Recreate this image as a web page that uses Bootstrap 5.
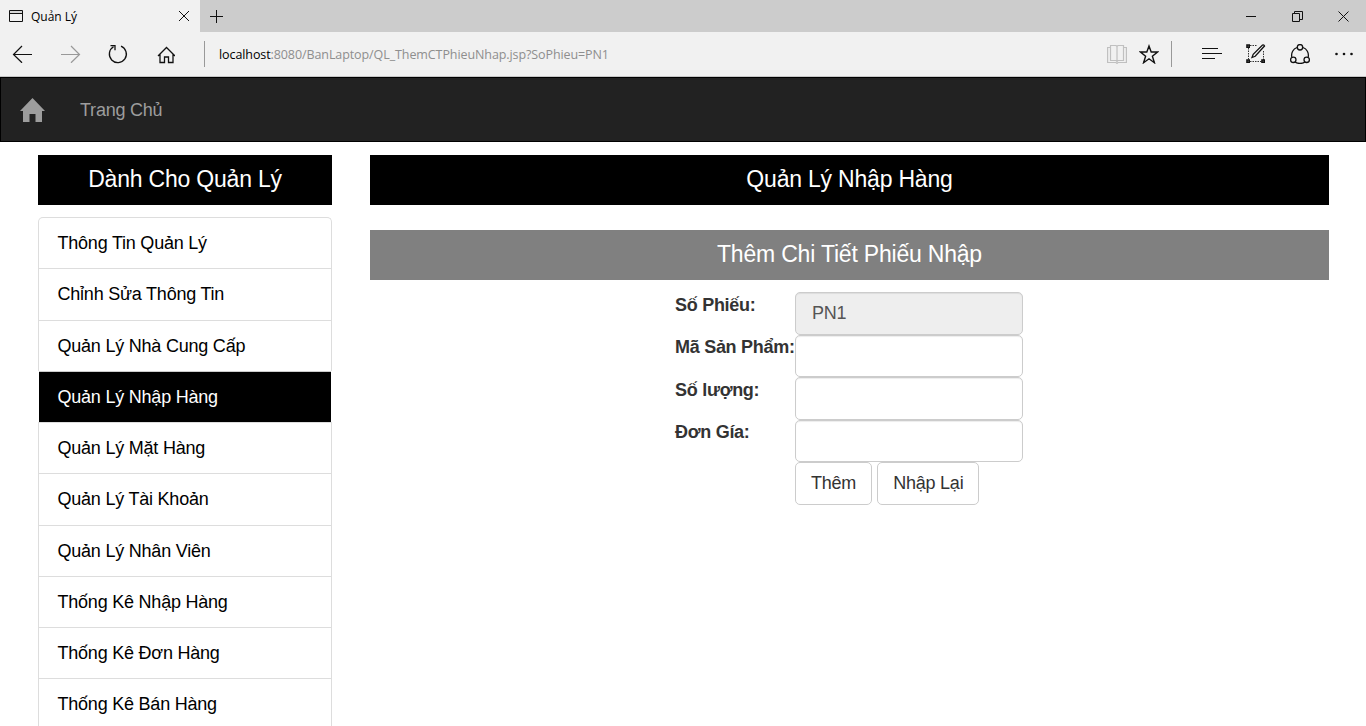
<!DOCTYPE html>
<html lang="vi">
<head>
<meta charset="utf-8">
<meta name="viewport" content="width=device-width, initial-scale=1">
<title>Quản Lý</title>
<link href="https://cdn.jsdelivr.net/npm/bootstrap@5.3.0/dist/css/bootstrap.min.css" rel="stylesheet">
<style>
body{font-family:"Liberation Sans",Arial,sans-serif;font-size:18px;letter-spacing:-.22px;line-height:25px;color:#333;height:726px;overflow:hidden}
svg{display:block;flex:none;fill:none;stroke:#111}
.chrome-ui{font-family:"Open Sans","Noto Sans",sans-serif;font-size:12px;line-height:16px;color:#000}
.tab-strip{height:32px;background:#ccc}
.tab-active{width:200px;height:32px;background:#f1f1f1;padding-left:9px;padding-right:10px}
.tab-title{margin-left:8px;padding-top:1px;letter-spacing:0}
.window-btns{gap:35px;padding-right:17px}
.address-row{height:45px;background:#f1f1f1;border-bottom:1px solid #c6c6c6;padding-left:12px;padding-right:12px}
.v-sep{width:1px;height:26px;background:#999}
.url-text{margin-left:14px;padding-top:2px;font-size:12.5px;letter-spacing:-.09px;color:#8e8e8e}
.site-nav{height:65px;background:#222;border:1px solid #000;padding:1px 19px 0}
.site-nav .nav-link{color:#9d9d9d;padding:1px 0 0}
.side-col{width:294px}
.main-col{width:959px}
.title-bar{height:50px;font-size:23px;letter-spacing:-.2px;line-height:48px;text-align:center;color:#fff;background:#000}
.title-bar.sub{background:gray;margin-top:25px}
.menu-list{margin-top:12px;border-radius:5px;--bs-list-group-border-color:#ddd}
.menu-list .list-group-item{height:51.25px;padding:13.2px 18.5px 0;color:#000;line-height:25px;border-width:1px 1px 0;border-color:#ddd}
.menu-list .list-group-item.active{background:#000;color:#fff;margin:0 1px;padding-left:18.5px;border:0;border-top:1px solid #ccc}
.entry-form{width:348px;margin:12px 0 0 305px;display:grid;grid-template-columns:120px 228px;grid-auto-rows:42.5px}
.entry-form label{font-weight:700;white-space:nowrap;padding-top:.6px;letter-spacing:-.28px}
.entry-form .form-control{height:42.5px;border:1px solid #ccc;border-radius:5px;padding:6px 16px;font-size:18px;letter-spacing:-.22px;color:#555;box-shadow:inset 0 1px 1px rgba(0,0,0,.075)}
.entry-form .form-control[readonly]{background:#eee}
.entry-form .btn{height:43px;border:1px solid #ccc;border-radius:5px;padding:0 15px;font-size:18px;letter-spacing:-.22px;color:#333;background:#fff}
</style>
</head>
<body>
<header class="chrome-ui">
  <div class="tab-strip d-flex">
    <div class="tab-active d-flex align-items-center">
      <svg width="14" height="12" stroke-width="1"><path d="M.5.5h13v11H.5zM0 3.5h14"/><path d="M1 2h12" stroke="#bbb"/></svg>
      <span class="tab-title">Quản Lý</span>
      <svg class="ms-auto" width="12" height="12" stroke-width="1"><path d="m1 1 10 10M11 1 1 11"/></svg>
    </div>
    <svg class="align-self-center" style="margin-left:9px" width="14" height="14"><path d="M7.5 1v13M1 7.5h13"/></svg>
    <div class="window-btns d-flex align-items-center ms-auto">
      <svg width="11" height="11"><path d="M0 5.5h10"/></svg>
      <svg width="11" height="11"><path d="M.5 2.5h7v8h-7zM2.5 2V.5h8v8H8"/></svg>
      <svg width="11" height="11"><path d="m.5.5 10 10m0-10-10 10"/></svg>
    </div>
  </div>
  <div class="address-row d-flex align-items-center">
    <svg width="21" height="18" stroke-width="1.2"><path d="M20 9.500H1.500M10 1 1.500 9.500l8.500 8.300"/></svg>
    <svg style="margin-left:28px" width="20" height="18" stroke-width="1.2"><path stroke="#999" d="M0 9.500h18.500M10 1 18.500 9.500 10 17.800"/></svg>
    <svg style="margin-left:27px" width="20" height="20" stroke-width="1.3"><path d="M13 2.200A8.500 8.500 0 1 1 5.500 2.800M2.500 1.700H7v4.500"/></svg>
    <svg style="margin-left:29px" width="18" height="20" stroke-width="1.3"><path d="M1 12 9.500 3.500 18 12M3 10.500v8h4.500V13h4v5.500H16v-8"/></svg>
    <div class="v-sep" style="margin-left:29px"></div>
    <div class="url-text"><span class="text-black">localhost</span>:8080/BanLaptop/QL_ThemCTPhieuNhap.jsp?SoPhieu=PN1</div>
    <svg class="ms-auto" width="20" height="20"><path stroke="#c0c0c0" stroke-width="1.200" d="M3 3.500H.6v15H9l1 1 1-1h8.400v-15H17M10 3v14M3.500 1.500H9l1 1 1-1h5.500v15H11l-1 1-1-1H3.500z"/></svg>
    <svg style="margin-left:12px" width="20" height="20" stroke-width="1.4"><path d="m10 2 2.200 6h6.300l-5.100 4.200 2 6.500-5.400-3.900-5.400 3.900 2-6.500L1.500 8h6.300z"/></svg>
    <div class="v-sep" style="margin-left:12px"></div>
    <svg style="margin-left:30px" width="20" height="14"><path d="M0 1.500h16M0 6.500h20M0 11.500h13"/></svg>
    <svg style="margin-left:24px" width="20" height="20"><path stroke="#333" stroke-dasharray="1.500 1" d="M4 1.500h7.500M2.500 4v12M4 17.500h12M17.500 7v9"/><path stroke-width="1.600" d="M1 1h2.200v2.200H1zM1 16h2.200v2.200H1zM16 16h2.200v2.200H16z"/><path stroke-width="1.300" d="M6 13.500l1.200-3.200L16.500 1q1.500-.5 2 1L9.200 12.300z"/></svg>
    <svg style="margin-left:24px" width="20" height="20" stroke-width="1.300"><path d="M7 3.500A8.300 8.300 0 0 0 1.800 13M13 3.500A8.300 8.300 0 0 1 18.200 13M5 18q5 3 10 0"/><circle cx="10" cy="3.300" r="2.700"/><circle cx="3.300" cy="15.800" r="2.700"/><circle cx="16.700" cy="15.800" r="2.700"/></svg>
    <svg style="margin-left:25px" width="19" height="4"><g fill="#111" stroke="none"><circle cx="1.500" cy="2" r="1.300"/><circle cx="9" cy="2" r="1.300"/><circle cx="16.500" cy="2" r="1.300"/></g></svg>
  </div>
</header>
<nav class="site-nav d-flex align-items-center">
  <svg width="26" height="25"><path fill="#9d9d9d" stroke="none" d="M12.500 0 25 13h-3v11h-6.500v-8h-6v8H3V13H0z"/></svg>
  <a class="nav-link" style="margin-left:34px" href="#">Trang Chủ</a>
</nav>
<main class="d-flex" style="padding:13px 37px 0 38px;gap:38px">
  <aside class="side-col">
    <div class="title-bar">Dành Cho Quản Lý</div>
    <div class="list-group menu-list">
      <a class="list-group-item" href="#">Thông Tin Quản Lý</a>
      <a class="list-group-item" href="#">Chỉnh Sửa Thông Tin</a>
      <a class="list-group-item" href="#">Quản Lý Nhà Cung Cấp</a>
      <a class="list-group-item active" href="#">Quản Lý Nhập Hàng</a>
      <a class="list-group-item" href="#">Quản Lý Mặt Hàng</a>
      <a class="list-group-item" href="#">Quản Lý Tài Khoản</a>
      <a class="list-group-item" href="#">Quản Lý Nhân Viên</a>
      <a class="list-group-item" href="#">Thống Kê Nhập Hàng</a>
      <a class="list-group-item" href="#">Thống Kê Đơn Hàng</a>
      <a class="list-group-item" href="#">Thống Kê Bán Hàng</a>
    </div>
  </aside>
  <section class="main-col">
    <div class="title-bar">Quản Lý Nhập Hàng</div>
    <div class="title-bar sub">Thêm Chi Tiết Phiếu Nhập</div>
    <form class="entry-form">
      <label for="f1">Số Phiếu:</label><input id="f1" class="form-control" value="PN1" readonly>
      <label for="f2">Mã Sản Phẩm:</label><input id="f2" class="form-control">
      <label for="f3">Số lượng:</label><input id="f3" class="form-control">
      <label for="f4">Đơn Gía:</label><input id="f4" class="form-control">
      <span></span>
      <div class="d-flex" style="gap:5px"><button type="button" class="btn">Thêm</button><button type="reset" class="btn text-nowrap">Nhập Lại</button></div>
    </form>
  </section>
</main>
<script src="https://cdn.jsdelivr.net/npm/bootstrap@5.3.0/dist/js/bootstrap.bundle.min.js"></script>
</body>
</html>
